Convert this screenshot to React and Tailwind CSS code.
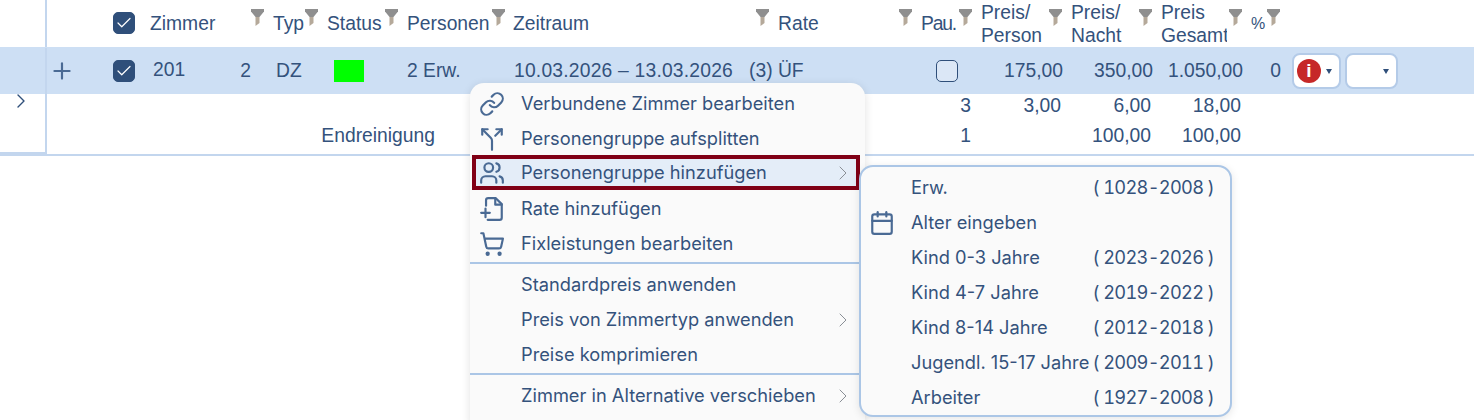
import React from "react";
import { Link, Split, Users, ShoppingCart, Calendar, ChevronRight, Plus, Check } from "lucide-react";

const headers = [
  { w: "w-[123px]", tw: "w-[101px]", label: "Zimmer" },
  { w: "w-[54px]", tw: "w-[32px]", label: "Typ" },
  { w: "w-[80px]", tw: "w-[58px]", label: "Status" },
  { w: "w-[106px]", tw: "w-[85px]", label: "Personen" },
  { w: "w-[265px]", tw: "w-[243px]", label: "Zeitraum" },
  { w: "w-[143px]", tw: "w-[121px]", label: "Rate" },
  { w: "w-[60px]", tw: "w-[38px]", label: "Pau.", small: "tracking-[-1.2px]" },
  { w: "w-[90px]", tw: "w-[68px]", label: ["Preis/", "Person"] },
  { w: "w-[90px]", tw: "w-[68px]", label: ["Preis/", "Nacht"] },
  { w: "w-[90px]", tw: "w-[68px]", label: ["Preis", "Gesamt"], clip: true },
  { w: "w-[38px]", tw: "w-[16px]", label: "%", small: "text-[16px]" },
];

const mainMenu = [
  { icon: Link, label: "Verbundene Zimmer bearbeiten" },
  { icon: Split, label: "Personengruppe aufsplitten" },
  { icon: Users, label: "Personengruppe hinzufügen", arrow: true, active: true },
  { icon: FileAdd, label: "Rate hinzufügen" },
  { icon: ShoppingCart, label: "Fixleistungen bearbeiten" },
  { divider: true },
  { label: "Standardpreis anwenden" },
  { label: "Preis von Zimmertyp anwenden", arrow: true },
  { label: "Preise komprimieren" },
  { divider: true },
  { label: "Zimmer in Alternative verschieben", arrow: true },
];

const subMenu = [
  { label: "Erw.", years: "( 1028-2008 )" },
  { label: "Alter eingeben", calendar: true },
  { label: "Kind 0-3 Jahre", years: "( 2023-2026 )" },
  { label: "Kind 4-7 Jahre", years: "( 2019-2022 )" },
  { label: "Kind 8-14 Jahre", years: "( 2012-2018 )" },
  { label: "Jugendl. 15-17 Jahre", years: "( 2009-2011 )" },
  { label: "Arbeiter", years: "( 1927-2008 )" },
];

function FileAdd({ size, strokeWidth, className }) {
  return (
    <svg width={size} height={size} viewBox="0 0 24 24" fill="none" stroke="currentColor" strokeWidth={strokeWidth} strokeLinecap="round" strokeLinejoin="round" className={className}>
      <path d="M6.5 9V4a2 2 0 0 1 2-2h7l5.5 5.5V20a2 2 0 0 1-2 2H8" />
      <path d="M15 2v6h6" />
      <path d="M2 15.5h8M6 11.5v8" />
    </svg>
  );
}

function Funnel({ className }) {
  return (
    <svg width="13" height="17" viewBox="0 0 13 17" className={className}>
      <path d="M0 0H13V2.5L8.5 8H4.5L0 2.5Z" fill="#8f8f8f" />
      <path d="M4.5 8H8.5V14L4.5 17Z" fill="#b5a99a" />
    </svg>
  );
}

function Box({ checked }) {
  return (
    <div className={`w-[22px] h-[22px] rounded-[5px] border border-[#2f4f7a] flex items-center justify-center ${checked ? "bg-[#2f4f7a]" : "bg-[#dbe7f6]"}`}>
      {checked && <Check size={18} strokeWidth={1.6} className="text-white" />}
    </div>
  );
}

function Caret({ className }) {
  return <div className={`w-0 h-0 border-x-[3.5px] border-x-transparent border-t-[5px] border-t-[#2f4f7a] ${className}`} />;
}

function SubRow({ left, rate, num1, num2, num3, first, bottom }) {
  return (
    <div className="flex h-[30px] items-start leading-[24px]">
      <div className={`w-[47px] h-full border-r-2 border-[#c3d6ee] shrink-0 ${bottom ? "border-b-2" : ""}`}>
        {first && <ChevronRight size={24} strokeWidth={1.4} className="ml-[9px] -mt-[5px] text-[#2f4f7a]" />}
      </div>
      <div className="w-[388px] text-right shrink-0">{left}</div>
      <div className="w-[536px] text-right shrink-0 ">{rate}</div>
      <div className="w-[90px] text-right shrink-0">{num1}</div>
      <div className="w-[90px] text-right shrink-0">{num2}</div>
      <div className="w-[90px] text-right shrink-0">{num3}</div>
    </div>
  );
}

export default function App() {
  return (
    <div className="relative h-[420px] overflow-hidden bg-white text-[#34527c] text-[19.3px] font-['Liberation_Sans',sans-serif]">
      {/* header */}
      <div className="flex h-[47px]">
        <div className="w-[47px] border-r-2 border-[#c3d6ee] shrink-0" />
        <div className="w-[66px] shrink-0" />
        <div className="w-[37px] shrink-0 pt-[12px]"><Box checked /></div>
        {headers.map((h, i) => (
          <div key={i} className={`${h.w} shrink-0 flex items-start leading-[23px]`}>
            <div className={`${h.tw} ${h.small || ""} shrink-0 whitespace-nowrap ${Array.isArray(h.label) ? "pt-[1px]" : "pt-[12px]"}`}>
              <div className={h.clip ? "w-[66px] overflow-hidden" : ""}>
                {Array.isArray(h.label) ? h.label.map(t => <div key={t}>{t}</div>) : h.label}
              </div>
            </div>
            <Funnel className="mt-[9px] shrink-0" />
          </div>
        ))}
      </div>

      {/* main row */}
      <div className="flex h-[47px] items-center pt-[1px] bg-[#cddff4]">
        <div className="w-[47px] h-full border-r-2 border-[#c3d6ee] shrink-0" />
        <div className="w-[66px] shrink-0 pl-[2px]"><Plus size={26} strokeWidth={2} className="text-[#4a6a94]" /></div>
        <div className="w-[40px] shrink-0"><Box checked /></div>
        <div className="w-[99px] shrink-0 flex justify-between pr-[1px]">
          <span className="-mt-[1px]">201</span>
          <span>2</span>
        </div>
        <div className="w-[82px] shrink-0 pl-[24px]">DZ</div>
        <div className="w-[73px] shrink-0"><div className="w-[30px] h-[22px] bg-[#00ff00]" /></div>
        <div className="w-[107px] shrink-0">2 Erw.</div>
        <div className="w-[235px] shrink-0 whitespace-nowrap tracking-[0.2px]">10.03.2026 – 13.03.2026</div>
        <div className="w-[187px] shrink-0">(3) ÜF</div>
        <Box />
        <div className="w-[105px] shrink-0 text-right">175,00</div>
        <div className="w-[90px] shrink-0 text-right">350,00</div>
        <div className="w-[90px] shrink-0 text-right">1.050,00</div>
        <div className="w-[38px] shrink-0 text-right">0</div>
        <div className="ml-[11px] w-[49px] h-[36px] bg-white rounded-[8px] border-2 border-[#b4cbe8] flex items-center pl-[3px] gap-[5px] shrink-0">
          <div className="w-[24px] h-[24px] rounded-full bg-[#c62828] text-white text-[19px] font-bold flex items-center justify-center">i</div>
          <Caret />
        </div>
        <div className="ml-[4px] w-[53px] h-[36px] bg-white rounded-[8px] border-2 border-[#b4cbe8] flex items-center justify-end pr-[7px] shrink-0">
          <Caret />
        </div>
      </div>

      {/* extra rows */}
      <SubRow first rate="3" num1="3,00" num2="6,00" num3="18,00" />
      <SubRow bottom left="Endreinigung" rate="1" num2="100,00" num3="100,00" />
      <div className="h-[2px] bg-[#c3d6ee]" />

      {/* context menu */}
      <div className="absolute left-[470px] top-[83px] w-[395px] h-[350px] pt-[3px] bg-[#fafafa] rounded-[14px] shadow-[0_2px_10px_rgba(0,0,0,0.12)] font-['Inter',sans-serif] text-[#34527c] text-[18.25px]">
        {mainMenu.map((m, i) => {
          if (m.divider) return <div key={i} className="h-[2px] mt-[1px] mb-[3px] bg-[#abc6e6]" />;
          const Icon = m.icon;
          return (
            <div key={i} className={`flex items-center h-[35px] ${m.active ? "ml-[2px] w-[388px] pr-[1px] bg-[#e4edf8] border-[4px] border-[#800016] -mt-[1px] mb-[1px]" : "pr-[10px]"}`}>
              <div className={`${m.active ? "w-[45px] pl-[3px]" : "w-[51px] pl-[9px]"} shrink-0`}>
                {Icon && <Icon size={26} strokeWidth={2} className="text-[#4a6a94]" />}
              </div>
              <span className="flex-1 whitespace-nowrap">{m.label}</span>
              {m.arrow && <ChevronRight size={24} strokeWidth={1} className="text-[#8a8f96]" />}
            </div>
          );
        })}
      </div>

      {/* submenu */}
      <div className="absolute left-[859px] top-[165px] w-[373px] h-[252px] pt-[3px] bg-[#fafafa] rounded-[14px] border-2 border-[#abc6e6] shadow-[0_2px_8px_rgba(0,0,0,0.1)] font-['Inter',sans-serif] text-[18.25px]">
        {subMenu.map(s => (
          <div key={s.label} className="flex items-center h-[35px] pr-[16px]">
            <div className="w-[50px] pl-[8px] shrink-0">
              {s.calendar && <Calendar size={26} strokeWidth={2} className="text-[#4a6a94]" />}
            </div>
            <span className="flex-1 whitespace-nowrap">{s.label}</span>
            {s.years && <span className="whitespace-nowrap tabular-nums tracking-[-0.7px]">{s.years}</span>}
          </div>
        ))}
      </div>
    </div>
  );
}
